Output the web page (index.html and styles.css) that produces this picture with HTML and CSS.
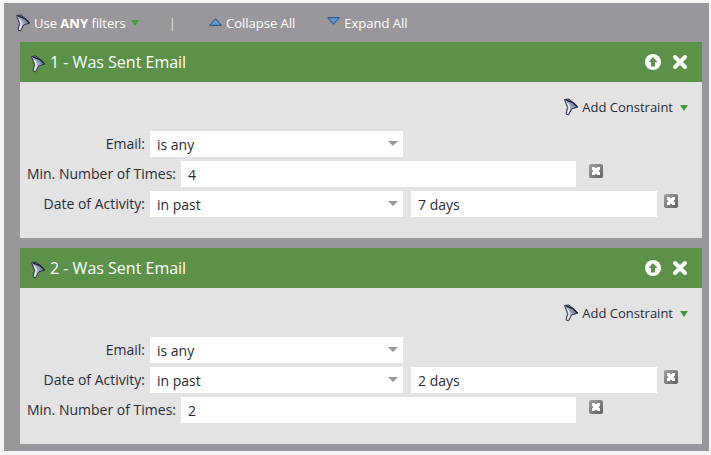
FILE: index.html
```html
<!DOCTYPE html>
<html lang="en">
<head>
    <meta charset="UTF-8">
    <meta name="viewport" content="width=device-width, initial-scale=1.0">
    <title>Smart List Filters</title>
    <link rel="stylesheet" href="styles.css">
</head>
<body>
    <svg class="defs" width="0" height="0">
        <defs>
            <linearGradient id="funnelFill" x1="0" y1="1" x2="1" y2="0.3">
                <stop offset="0" stop-color="#e9edf5"/>
                <stop offset="0.5" stop-color="#aeb6cc"/>
                <stop offset="1" stop-color="#4a5476"/>
            </linearGradient>
            <linearGradient id="removeFill" x1="0" y1="0" x2="1" y2="1">
                <stop offset="0" stop-color="#a2a2a2"/>
                <stop offset="1" stop-color="#5f5f5f"/>
            </linearGradient>
            <symbol id="funnel" viewBox="0 0 16 18">
                <path d="M1.5 1.5 L6 1 L15 9 L8.5 11 L5.5 17 L3 16 L4.5 9.5 Z" fill="url(#funnelFill)" stroke="#2c3248" stroke-width="1" stroke-linejoin="round"/>
                <path d="M3 2 L10 4.5 L14 8.5" fill="none" stroke="#20263a" stroke-width="1.4"/>
                <path d="M4.5 5 L6.5 9.5 L5 14.5" fill="none" stroke="#ffffff" stroke-width="1"/>
            </symbol>
            <symbol id="remove" viewBox="0 0 14 14">
                <rect width="14" height="14" rx="2" fill="url(#removeFill)"/>
                <path d="M3 3 H5.5 L7 4.5 L8.5 3 H11 V5.5 L9.5 7 L11 8.5 V11 H8.5 L7 9.5 L5.5 11 H3 V8.5 L4.5 7 L3 5.5 Z" fill="#ffffff"/>
            </symbol>
        </defs>
    </svg>

    <div class="panel">
        <div class="toolbar">
            <span class="tool-item filter-mode">
                <svg class="funnel-icon"><use href="#funnel"/></svg>
                Use&nbsp;<b>ANY</b>&nbsp;filters
                <span class="green-arrow"></span>
            </span>
            <span class="tool-sep">|</span>
            <span class="tool-item collapse-all">
                <svg class="tri-icon" viewBox="0 0 13 8"><path d="M6.5 .7 L12.3 7.3 H.7 Z" fill="#5b9bd0" stroke="#1f4f80"/></svg>
                Collapse All
            </span>
            <span class="tool-item expand-all">
                <svg class="tri-icon tri-down" viewBox="0 0 13 8"><path d="M.7 .7 H12.3 L6.5 7.3 Z" fill="#5b9bd0" stroke="#1f4f80"/></svg>
                Expand All
            </span>
        </div>

        <div class="filter-card">
            <div class="card-header">
                <svg class="funnel-icon"><use href="#funnel"/></svg>
                <span class="card-title">1 - Was Sent Email</span>
                <svg class="head-btn" viewBox="0 0 16 16"><circle cx="8" cy="8" r="8" fill="#fff"/><path d="M8 3 L12.5 8 H10 V12.5 H6 V8 H3.5 Z" fill="#5b9149"/></svg>
                <svg class="head-btn close-btn" viewBox="0 0 16 16"><path d="M3 3 L13 13 M13 3 L3 13" stroke="#fff" stroke-width="4" stroke-linecap="round"/></svg>
            </div>
            <div class="card-body">
                <div class="constraint">
                    <svg class="funnel-icon"><use href="#funnel"/></svg>
                    Add Constraint
                    <span class="green-arrow"></span>
                </div>
                <div class="row">
                    <label class="lbl">Email:</label>
                    <div class="field select-field">is any<span class="select-arrow"></span></div>
                </div>
                <div class="row">
                    <label class="lbl lbl-wide">Min. Number of Times:</label>
                    <div class="field number-field">4</div>
                    <svg class="remove-btn number-remove"><use href="#remove"/></svg>
                </div>
                <div class="row">
                    <label class="lbl">Date of Activity:</label>
                    <div class="field select-field">in past<span class="select-arrow"></span></div>
                    <div class="field value-field">7 days</div>
                    <svg class="remove-btn"><use href="#remove"/></svg>
                </div>
            </div>
        </div>

        <div class="filter-card">
            <div class="card-header">
                <svg class="funnel-icon"><use href="#funnel"/></svg>
                <span class="card-title">2 - Was Sent Email</span>
                <svg class="head-btn" viewBox="0 0 16 16"><circle cx="8" cy="8" r="8" fill="#fff"/><path d="M8 3 L12.5 8 H10 V12.5 H6 V8 H3.5 Z" fill="#5b9149"/></svg>
                <svg class="head-btn close-btn" viewBox="0 0 16 16"><path d="M3 3 L13 13 M13 3 L3 13" stroke="#fff" stroke-width="4" stroke-linecap="round"/></svg>
            </div>
            <div class="card-body">
                <div class="constraint">
                    <svg class="funnel-icon"><use href="#funnel"/></svg>
                    Add Constraint
                    <span class="green-arrow"></span>
                </div>
                <div class="row">
                    <label class="lbl">Email:</label>
                    <div class="field select-field">is any<span class="select-arrow"></span></div>
                </div>
                <div class="row">
                    <label class="lbl">Date of Activity:</label>
                    <div class="field select-field">in past<span class="select-arrow"></span></div>
                    <div class="field value-field">2 days</div>
                    <svg class="remove-btn"><use href="#remove"/></svg>
                </div>
                <div class="row">
                    <label class="lbl lbl-wide">Min. Number of Times:</label>
                    <div class="field number-field">2</div>
                    <svg class="remove-btn number-remove"><use href="#remove"/></svg>
                </div>
            </div>
        </div>
    </div>
</body>
</html>
```

FILE: styles.css
```css
body {
    margin: 0;
    background-color: #f4f4f4;
    font-family: "Open Sans", "Liberation Sans", sans-serif;
    font-size: 13px;
    color: #2b2b33;
    overflow: hidden;
}
.defs {
    display: block;
}
.panel {
    margin: 3px 2px 0 4px;
    height: 448px;
    background-color: #99979c;
    padding-left: 16px;
    padding-right: 7px;
    box-sizing: border-box;
}
.toolbar {
    height: 39px;
    display: flex;
    align-items: center;
    color: #fff;
}
.tool-item {
    display: flex;
    align-items: center;
}
.filter-mode {
    margin-left: -5px;
}
.filter-mode .funnel-icon {
    margin-right: 3px;
}
.tool-sep {
    margin-left: 30px;
    color: #e8dcdc;
}
.collapse-all {
    margin-left: 33px;
}
.expand-all {
    margin-left: 32px;
}
.tri-icon {
    width: 13px;
    height: 8px;
    margin-right: 4px;
    margin-top: -2px;
    flex: none;
}
.tri-down {
    margin-top: -3px;
}
.green-arrow {
    width: 0;
    height: 0;
    margin-left: 7px;
    margin-top: 1px;
    border-left: 4px solid transparent;
    border-right: 4px solid transparent;
    border-top: 6px solid #3f9a3a;
}
.filter-mode .green-arrow {
    margin-left: 5px;
}
.funnel-icon {
    width: 16px;
    height: 18px;
    flex: none;
}
.filter-card {
    margin-bottom: 10px;
}
.card-header {
    height: 40px;
    background-color: #5b9149;
    display: flex;
    align-items: center;
    padding-left: 10px;
    padding-right: 14px;
    color: #fff;
}
.card-header .funnel-icon {
    margin-top: 3px;
}
.card-title {
    margin-left: 4px;
    font-size: 16px;
    flex: 1;
}
.head-btn {
    width: 16px;
    height: 16px;
}
.close-btn {
    margin-left: 11px;
}
.card-body {
    height: 156px;
    box-sizing: border-box;
    background-color: #e3e3e3;
    padding-top: 15px;
}
.constraint {
    height: 20px;
    margin-bottom: 14px;
    padding-right: 14px;
    display: flex;
    align-items: center;
    justify-content: flex-end;
}
.constraint .funnel-icon {
    margin-right: 3px;
}
.row {
    display: flex;
    align-items: flex-start;
    height: 26px;
    margin-bottom: 4px;
}
.lbl {
    width: 125px;
    margin-right: 5px;
    text-align: right;
    font-size: 14px;
    line-height: 25px;
    white-space: nowrap;
}
.lbl-wide {
    width: 156px;
}
.field {
    height: 26px;
    line-height: 28px;
    padding-left: 7px;
    box-sizing: border-box;
    background-color: #fff;
    font-size: 14px;
}
.select-field {
    width: 253px;
    position: relative;
}
.select-arrow {
    position: absolute;
    right: 5px;
    top: 10px;
    width: 0;
    height: 0;
    border-left: 5px solid transparent;
    border-right: 5px solid transparent;
    border-top: 5px solid #999;
}
.number-field {
    width: 395px;
}
.value-field {
    width: 246px;
    margin-left: 8px;
}
.remove-btn {
    width: 14px;
    height: 14px;
    margin-left: 7px;
    margin-top: 3px;
}
.number-remove {
    margin-left: 13px;
}
```
